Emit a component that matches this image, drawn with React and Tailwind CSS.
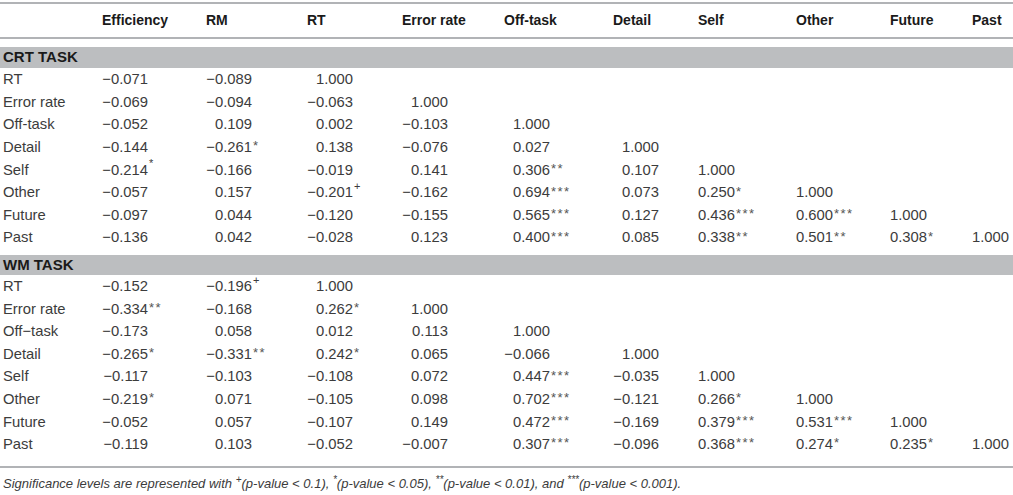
import React from "react";

const COLS = ["Efficiency", "RM", "RT", "Error rate", "Off-task", "Detail", "Self", "Other", "Future", "Past"];

// columns holding a negative value get the wider number box, so decimals line up
const HAS_NEG = [true, true, true, true, true, true, false, false, false, false];

const CRT = [
  ["RT", ["−0.071", "−0.089", "1.000"]],
  ["Error rate", ["−0.069", "−0.094", "−0.063", "1.000"]],
  ["Off-task", ["−0.052", "0.109", "0.002", "−0.103", "1.000"]],
  ["Detail", ["−0.144", "−0.261*", "0.138", "−0.076", "0.027", "1.000"]],
  ["Self", ["−0.214^*", "−0.166", "−0.019", "0.141", "0.306**", "0.107", "1.000"]],
  ["Other", ["−0.057", "0.157", "−0.201^+", "−0.162", "0.694***", "0.073", "0.250*", "1.000"]],
  ["Future", ["−0.097", "0.044", "−0.120", "−0.155", "0.565***", "0.127", "0.436***", "0.600***", "1.000"]],
  ["Past", ["−0.136", "0.042", "−0.028", "0.123", "0.400***", "0.085", "0.338**", "0.501**", "0.308*", "1.000"]],
];

const WM = [
  ["RT", ["−0.152", "−0.196^+", "1.000"]],
  ["Error rate", ["−0.334**", "−0.168", "0.262*", "1.000"]],
  ["Off−task", ["−0.173", "0.058", "0.012", "0.113", "1.000"]],
  ["Detail", ["−0.265*", "−0.331**", "0.242*", "0.065", "−0.066", "1.000"]],
  ["Self", ["−0.117", "−0.103", "−0.108", "0.072", "0.447***", "−0.035", "1.000"]],
  ["Other", ["−0.219*", "0.071", "−0.105", "0.098", "0.702***", "−0.121", "0.266*", "1.000"]],
  ["Future", ["−0.052", "0.057", "−0.107", "0.149", "0.472***", "−0.169", "0.379***", "0.531***", "1.000"]],
  ["Past", ["−0.119", "0.103", "−0.052", "−0.007", "0.307***", "−0.096", "0.368***", "0.274*", "0.235*", "1.000"]],
];

const GRID = "grid grid-cols-[102px_104px_101px_95px_102px_109px_85px_98px_94px_82px_1fr]";

function Cell({ value, wide }) {
  const m = value.match(/^([−\d.]+)(\^?)(.*)$/);
  const num = m[1];
  const sup = m[2] === "^";
  const mark = m[3];
  return (
    <div className="flex items-center whitespace-nowrap">
      <span className={`${wide ? "w-[46px]" : "w-[37px]"} inline-block text-right`}>{num}</span>
      {mark && (
        <span
          className={
            sup
              ? "text-[11px] relative -top-[6px] ml-[1px]"
              : "text-[13px] relative -top-[1px] tracking-[1.5px] ml-[1px] text-[#555]"
          }
        >
          {mark}
        </span>
      )}
    </div>
  );
}

function Section({ title, rows, first }) {
  return (
    <>
      <div
        className={`${first ? "h-[21px]" : "h-[20px] mt-[6px]"} bg-[#bcbec0] flex items-center pl-[3px] font-bold text-[15px] text-[#1a1a1a]`}
      >
        {title}
      </div>
      {rows.map(([label, vals]) => (
        <div key={title + label} className={`${GRID} h-[22.6px] items-center`}>
          <div className="pl-[3px]">{label}</div>
          {vals.map((v, i) => (
            <Cell key={i} value={v} wide={HAS_NEG[i]} />
          ))}
        </div>
      ))}
    </>
  );
}

export default function App() {
  return (
    <div className="w-[1013px] h-[495px] bg-white text-[#3c3c3c] text-[14.8px] font-['Liberation_Sans',Arial,sans-serif] pt-[2px]">
      <div className="border-t-2 border-b-2 border-[#b1b3b6] h-[37px]">
        <div className={`${GRID} h-full items-center font-bold text-[14px] text-[#1a1a1a]`}>
          <div />
          {COLS.map((c) => (
            <div key={c}>{c}</div>
          ))}
        </div>
      </div>
      <div className="mt-[8px]">
        <Section title="CRT TASK" rows={CRT} first />
        <Section title="WM TASK" rows={WM} />
      </div>
      <div className="mt-[10px] border-t-2 border-[#b1b3b6]" />
      <p className="pl-[3px] pt-[6px] italic text-[13px] text-[#3c3c3c]">
        Significance levels are represented with <sup className="text-[10px]">+</sup>(p-value &lt; 0.1),{" "}
        <sup className="text-[10px]">*</sup>(p-value &lt; 0.05), <sup className="text-[10px]">**</sup>(p-value &lt; 0.01), and{" "}
        <sup className="text-[10px]">***</sup>(p-value &lt; 0.001).
      </p>
    </div>
  );
}
